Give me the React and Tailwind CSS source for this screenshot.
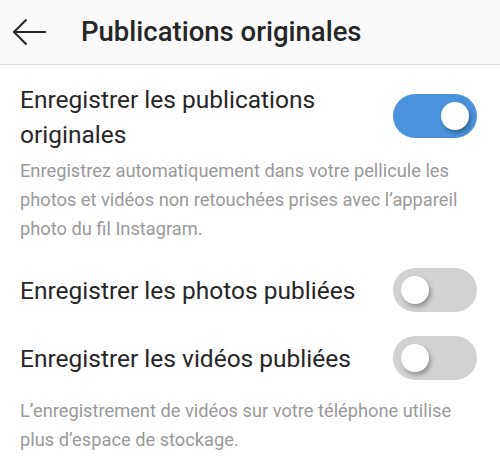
const Toggle = ({ on }) => (
  <div
    className={`flex h-[44px] w-[84px] shrink-0 items-center rounded-full px-[8px] ${
      on ? "justify-end bg-[#4a93dc]" : "justify-start bg-[#d2d2d2]"
    }`}
  >
    <div className="h-[28px] w-[28px] rounded-full bg-white shadow-[2px_3px_4px_rgba(0,0,0,0.3)]" />
  </div>
);

const App = () => {
  return (
    <div className="h-[472px] w-[500px] overflow-hidden bg-white font-['Roboto',sans-serif] text-[#262626]">
      {/* header */}
      <div className="flex h-[65px] items-center border-b border-[#dcdcdc] bg-[#fafafa]">
        <svg
          width="34"
          height="28"
          viewBox="0 0 34 28"
          className="ml-[13px]"
          fill="none"
          stroke="#262626"
          strokeWidth="2"
        >
          <path d="M1 14h32" />
          <path d="M13.5 1.5L1 14l12.5 12.5" />
        </svg>
        <h1 className="ml-[34px] text-[27.5px] font-medium">
          Publications originales
        </h1>
      </div>

      <div className="pr-[23px] pl-[20px]">
        <div className="mt-[17px] flex items-start justify-between">
          <p className="text-[24.5px] leading-[35px]">
            Enregistrer les publications
            <br />
            originales
          </p>
          <div className="mt-[12px]">
            <Toggle on />
          </div>
        </div>
        <p className="mt-[4px] text-[18.25px] leading-[29px] text-[#999999]">
          Enregistrez automatiquement dans votre pellicule les photos et vidéos
          non retouchées prises avec l’appareil photo du fil Instagram.
        </p>

        <div className="mt-[25px] flex h-[44px] items-center justify-between">
          <p className="text-[24.5px] leading-[35px]">
            Enregistrer les photos publiées
          </p>
          <Toggle />
        </div>

        <div className="mt-[24px] flex h-[44px] items-center justify-between">
          <p className="text-[24.5px] leading-[35px]">
            Enregistrer les vidéos publiées
          </p>
          <Toggle />
        </div>
        <p className="mt-[16px] text-[18.25px] leading-[29px] text-[#999999]">
          L’enregistrement de vidéos sur votre téléphone utilise plus d’espace
          de stockage.
        </p>
      </div>
    </div>
  );
};

export default App;
